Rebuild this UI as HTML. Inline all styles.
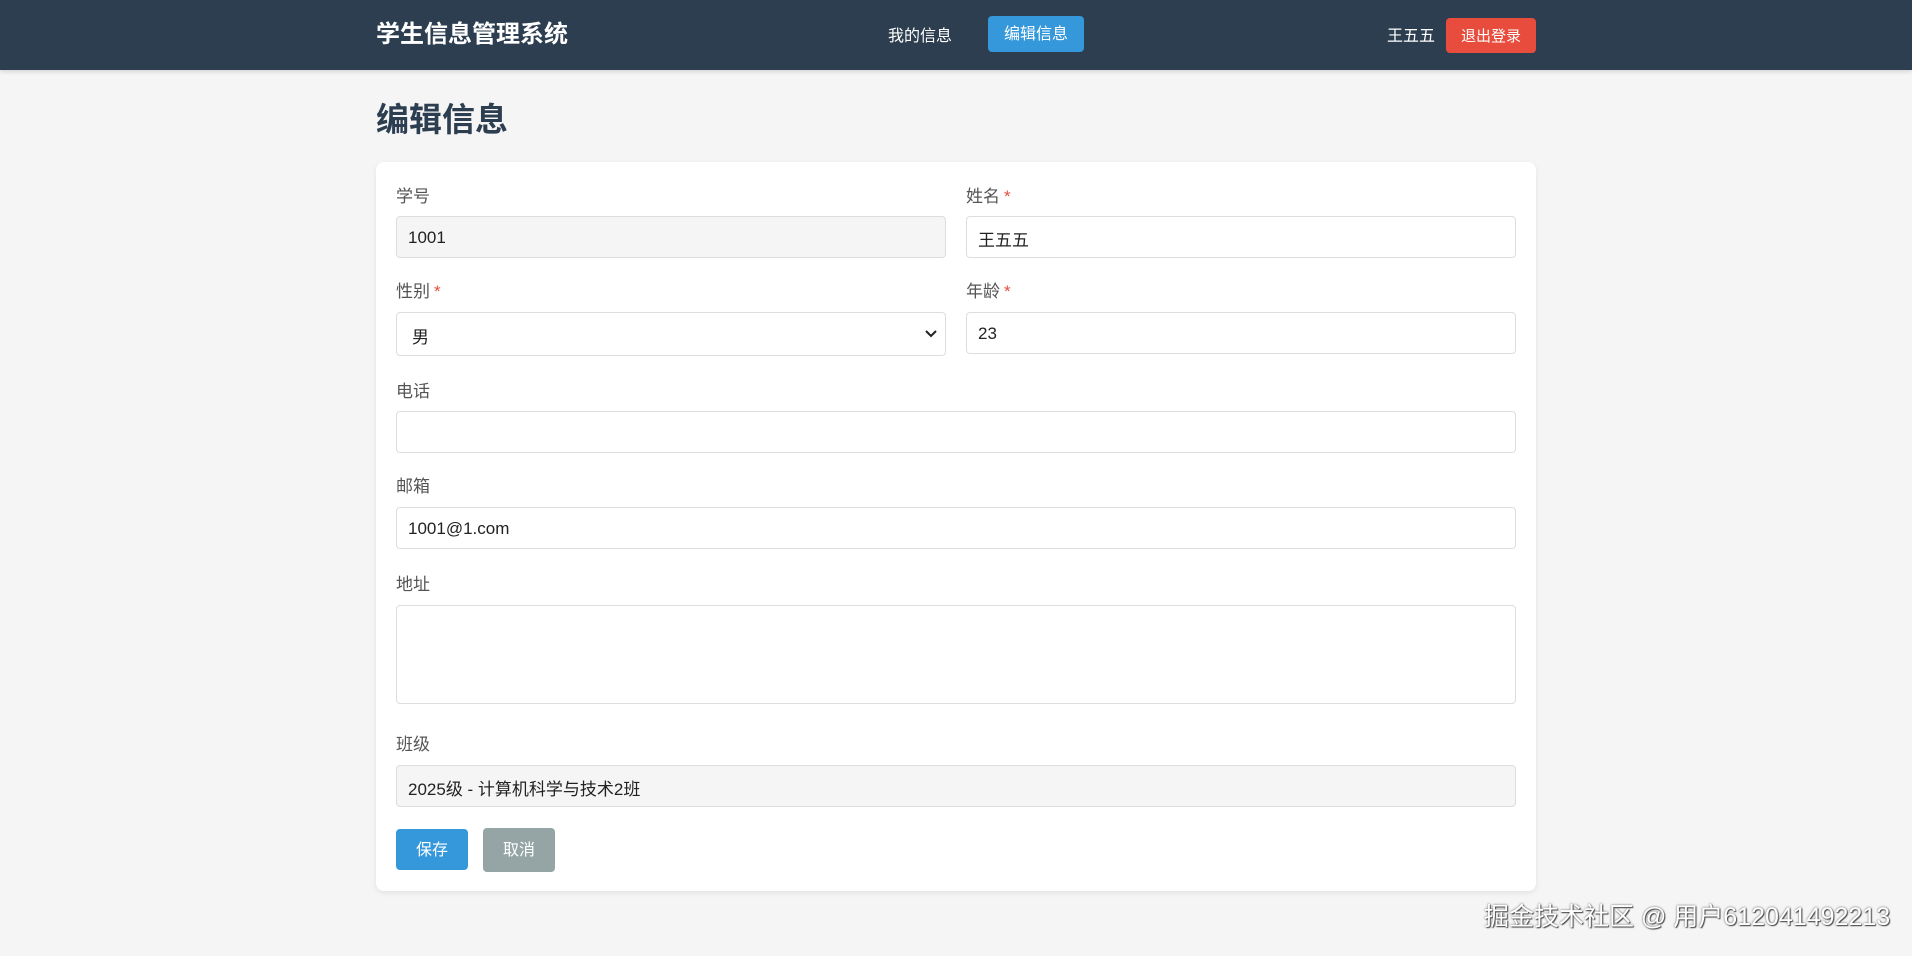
<!DOCTYPE html>
<html><head><meta charset="utf-8"><style>
*{box-sizing:border-box;margin:0;padding:0}
body{width:1912px;height:956px;background:#f5f5f5;font-family:"Liberation Sans","Noto Sans CJK SC",sans-serif;position:relative;overflow:hidden;color:#333}
.hdr{position:absolute;left:0;top:0;width:1912px;height:70px;background:#2c3e50;box-shadow:0 2px 4px rgba(0,0,0,.12)}
.a{position:absolute}
.logo{left:376px;top:18px;font-size:24px;font-weight:bold;color:#fff;line-height:34px}
.nav{color:#fff;font-size:16px;line-height:36px;text-align:center}
.btn{border-radius:4px;color:#fff;font-size:16px;text-align:center}
h1{position:absolute;left:376px;top:99px;font-size:33px;color:#2c3e50;line-height:42px}
.card{left:376px;top:162px;width:1160px;height:729px;background:#fff;border-radius:8px;box-shadow:0 2px 6px rgba(0,0,0,.08)}
.lb{font-size:17px;color:#555;line-height:22px;margin-top:2px}
.lb i{color:#e74c3c;font-style:normal;margin-left:4px}
.in{border:1px solid #ddd;border-radius:4px;background:#fff;font-size:17px;color:#222;padding-left:11px;padding-top:2px;display:flex;align-items:center}
.dis{background:#f5f5f5}
</style></head><body>
<div class="hdr"></div>
<div class="a logo">学生信息管理系统</div>
<div class="a nav" style="left:884px;top:19px;width:72px">我的信息</div>
<div class="a btn nav" style="left:988px;top:16px;width:96px;height:36px;line-height:38px;background:#3498db">编辑信息</div>
<div class="a nav" style="left:1387px;top:19px;width:48px">王五五</div>
<div class="a btn" style="left:1446px;top:18px;width:90px;height:35px;line-height:37px;background:#e74c3c;font-size:15px">退出登录</div>
<h1>编辑信息</h1>
<div class="a card"></div>
<div class="a lb" style="left:396px;top:184px">学号</div>
<div class="a in dis" style="left:396px;top:216px;width:550px;height:42px">1001</div>
<div class="a lb" style="left:966px;top:184px">姓名<i>*</i></div>
<div class="a in" style="left:966px;top:216px;width:550px;height:42px">王五五</div>
<div class="a lb" style="left:396px;top:279px">性别<i>*</i></div>
<div class="a in" style="left:396px;top:312px;width:550px;height:44px;padding-left:15px">男<svg style="position:absolute;right:8px;top:17px" width="12" height="8" viewBox="0 0 12 8"><path d="M1 1l5 5 5-5" fill="none" stroke="#222" stroke-width="2"/></svg></div>
<div class="a lb" style="left:966px;top:279px">年龄<i>*</i></div>
<div class="a in" style="left:966px;top:312px;width:550px;height:42px">23</div>
<div class="a lb" style="left:396px;top:379px">电话</div>
<div class="a in" style="left:396px;top:411px;width:1120px;height:42px"></div>
<div class="a lb" style="left:396px;top:474px">邮箱</div>
<div class="a in" style="left:396px;top:507px;width:1120px;height:42px">1001@1.com</div>
<div class="a lb" style="left:396px;top:572px">地址</div>
<div class="a in" style="left:396px;top:605px;width:1120px;height:99px"></div>
<div class="a lb" style="left:396px;top:732px">班级</div>
<div class="a in dis" style="left:396px;top:765px;width:1120px;height:42px">2025级 - 计算机科学与技术2班</div>
<div class="a btn" style="left:396px;top:829px;width:72px;height:41px;line-height:43px;background:#3498db">保存</div>
<div class="a btn" style="left:483px;top:828px;width:72px;height:44px;line-height:46px;background:#95a5a6">取消</div>
<div class="a" style="left:1484px;top:901px;font-size:25px;color:#fff;line-height:32px;text-shadow:0 0 2px #555,1px 1px 1px #444;white-space:nowrap">掘金技术社区 @ 用户612041492213</div>
</body></html>
